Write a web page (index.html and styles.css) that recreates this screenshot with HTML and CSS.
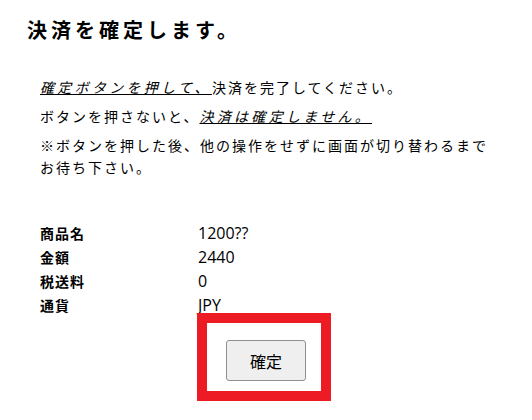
FILE: index.html
```html
<!DOCTYPE html>
<html lang="ja">
<head>
    <meta charset="UTF-8">
    <meta name="viewport" content="width=device-width, initial-scale=1.0">
    <title>決済確認</title>
    <link rel="stylesheet" href="styles.css">
</head>
<body>
    <h1 class="page-title">決済を確定します。</h1>

    <div class="notes">
        <p><em>確定ボタンを押して、</em>決済を完了してください。</p>
        <p>ボタンを押さないと、<em>決済は確定しません。</em></p>
        <p>※ボタンを押した後、他の操作をせずに画面が切り替わるまで<br>お待ち下さい。</p>
    </div>

    <table class="order-table">
        <tr><th>商品名</th><td>1200??</td></tr>
        <tr><th>金額</th><td>2440</td></tr>
        <tr><th>税送料</th><td>0</td></tr>
        <tr><th>通貨</th><td>JPY</td></tr>
    </table>

    <div class="highlight">
        <button class="confirm-button" type="submit">確定</button>
    </div>
</body>
</html>
```

FILE: styles.css
```css
body {
    font-family: "Noto Sans CJK JP", "Noto Sans", sans-serif;
    margin: 0;
    padding: 16px 27px;
    background-color: #fff;
    color: #000;
}
.page-title {
    margin: 0;
    font-size: 20px;
    line-height: 28px;
    font-weight: bold;
    letter-spacing: 4px;
}
.notes {
    margin-top: 32px;
    padding-left: 13px;
    font-size: 14px;
    line-height: 22px;
    letter-spacing: 2px;
}
.notes p {
    margin: 0 0 7px;
}
.notes em {
    text-decoration: underline;
    letter-spacing: 3.3px;
}
.order-table {
    margin: 43px 0 0 13px;
    border-collapse: collapse;
}
.order-table th,
.order-table td {
    padding: 0;
    height: 24px;
    text-align: left;
    vertical-align: middle;
}
.order-table th {
    width: 158px;
    font-size: 14px;
    font-weight: bold;
    letter-spacing: 1px;
}
.order-table td {
    font-family: "Open Sans", "Noto Sans", sans-serif;
    font-size: 16px;
}
.highlight {
    position: relative;
    display: flex;
    width: 80px;
    margin: -4px 0 0 170px;
    padding: 17px 15px 10px 19px;
    border: 10px solid #ed1c24;
    background-color: #fff;
}
.confirm-button {
    width: 80px;
    height: 41px;
    padding: 0;
    font-family: "Noto Sans CJK JP", sans-serif;
    font-size: 16px;
    color: #000;
    background-color: #efefef;
    border: 1px solid #8f8f8f;
    border-radius: 3px;
}
```
